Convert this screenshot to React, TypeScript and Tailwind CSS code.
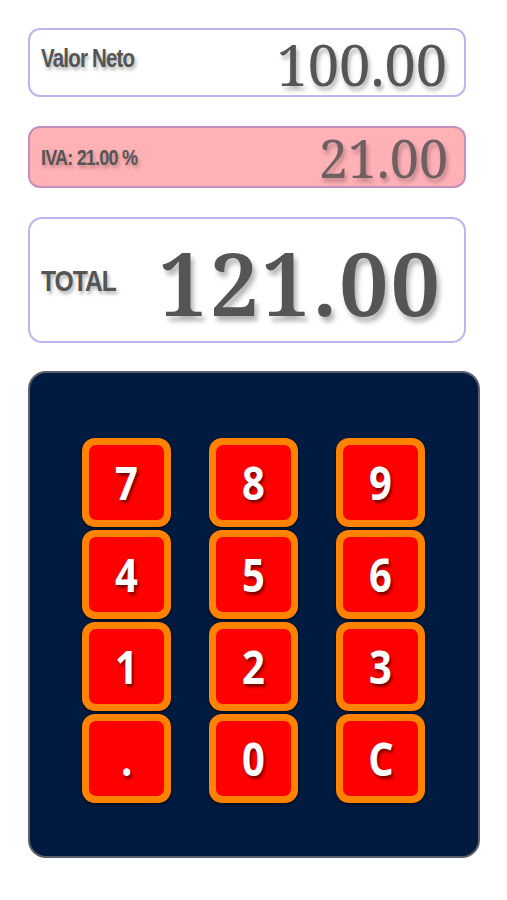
import { useState } from 'react';

const KEYS = ['7', '8', '9', '4', '5', '6', '1', '2', '3', '.', '0', 'C'];

export default function App() {
  const [neto, setNeto] = useState('100.00');
  const iva = 21;
  const ivaAmount = (parseFloat(neto || '0') * iva) / 100;
  const total = parseFloat(neto || '0') + ivaAmount;

  const press = (k: string) => {
    if (k === 'C') return setNeto('');
    setNeto((v) => v + k);
  };

  return (
    <div className="w-[507px] h-[900px] bg-white pt-[28px] pl-[28px]">
      {/* Valor neto */}
      <div className="w-[438px] h-[69px] rounded-[12px] border-2 border-[#bcb6ee] bg-white flex items-center justify-between pl-[11px] pr-[17px]">
        <span className="inline-block origin-left scale-x-[0.82] font-['Liberation_Sans',Arial,sans-serif] text-[25px] font-bold tracking-[-1px] text-[#555] [text-shadow:2px_3px_4px_rgba(0,0,0,0.3)] -mt-[8px]">
          Valor Neto
        </span>
        <span className="font-['Noto_Serif',serif] text-[56px] leading-none text-[#555] [text-shadow:2px_4px_4px_rgba(0,0,0,0.3)] mt-[2px]">
          {neto ? parseFloat(neto).toFixed(2) : '0.00'}
        </span>
      </div>

      {/* IVA */}
      <div className="mt-[29px] w-[438px] h-[62px] rounded-[12px] border-2 border-[#c48fba] bg-[#ffb1b6] flex items-center justify-between pl-[11px] pr-[16px]">
        <span className="inline-block origin-left scale-x-[0.82] font-['Liberation_Sans',Arial,sans-serif] text-[22px] font-bold tracking-[-1px] text-[#555] [text-shadow:2px_3px_4px_rgba(0,0,0,0.25)]">
          IVA: {iva.toFixed(2)} %
        </span>
        <span className="font-['Noto_Serif',serif] text-[52px] leading-none text-[#6e5f62] [text-shadow:2px_4px_4px_rgba(0,0,0,0.25)] mt-[2px]">
          {ivaAmount.toFixed(2)}
        </span>
      </div>

      {/* Total */}
      <div className="mt-[29px] w-[438px] h-[126px] rounded-[14px] border-2 border-[#bcb6ee] bg-white flex items-center justify-between pl-[11px] pr-[22px]">
        <span className="inline-block origin-left scale-x-[0.82] font-['Liberation_Sans',Arial,sans-serif] text-[30px] font-bold tracking-[-1.2px] text-[#555] [text-shadow:2px_3px_4px_rgba(0,0,0,0.3)]">
          TOTAL
        </span>
        <span className="font-['Noto_Serif',serif] text-[88px] leading-none font-semibold tracking-[2px] text-[#555] [text-shadow:3px_5px_5px_rgba(0,0,0,0.3)] mt-[4px]">
          {total.toFixed(2)}
        </span>
      </div>

      {/* Keypad */}
      <div className="mt-[28px] w-[452px] h-[487px] rounded-[18px] border-2 border-[#5b606b] bg-[#001a40] pt-[65px] pl-[52px]">
        <div className="grid grid-cols-[repeat(3,89px)] gap-x-[38px] gap-y-[3px]">
          {KEYS.map((k) => (
            <button
              key={k}
              onClick={() => press(k)}
              className="w-[89px] h-[89px] rounded-[13px] bg-[#ff8200] p-[7px] shadow-[0_2px_3px_rgba(0,0,0,0.5)]"
            >
              <div className="w-full h-full rounded-[7px] bg-[#ff0000] flex items-center justify-center font-['Open_Sans','Noto_Sans',sans-serif] text-white text-[47px] font-bold leading-none [text-shadow:2px_3px_3px_rgba(120,0,0,0.9)]">
                <span className="inline-block scale-x-[0.85]">{k}</span>
              </div>
            </button>
          ))}
        </div>
      </div>
    </div>
  );
}
